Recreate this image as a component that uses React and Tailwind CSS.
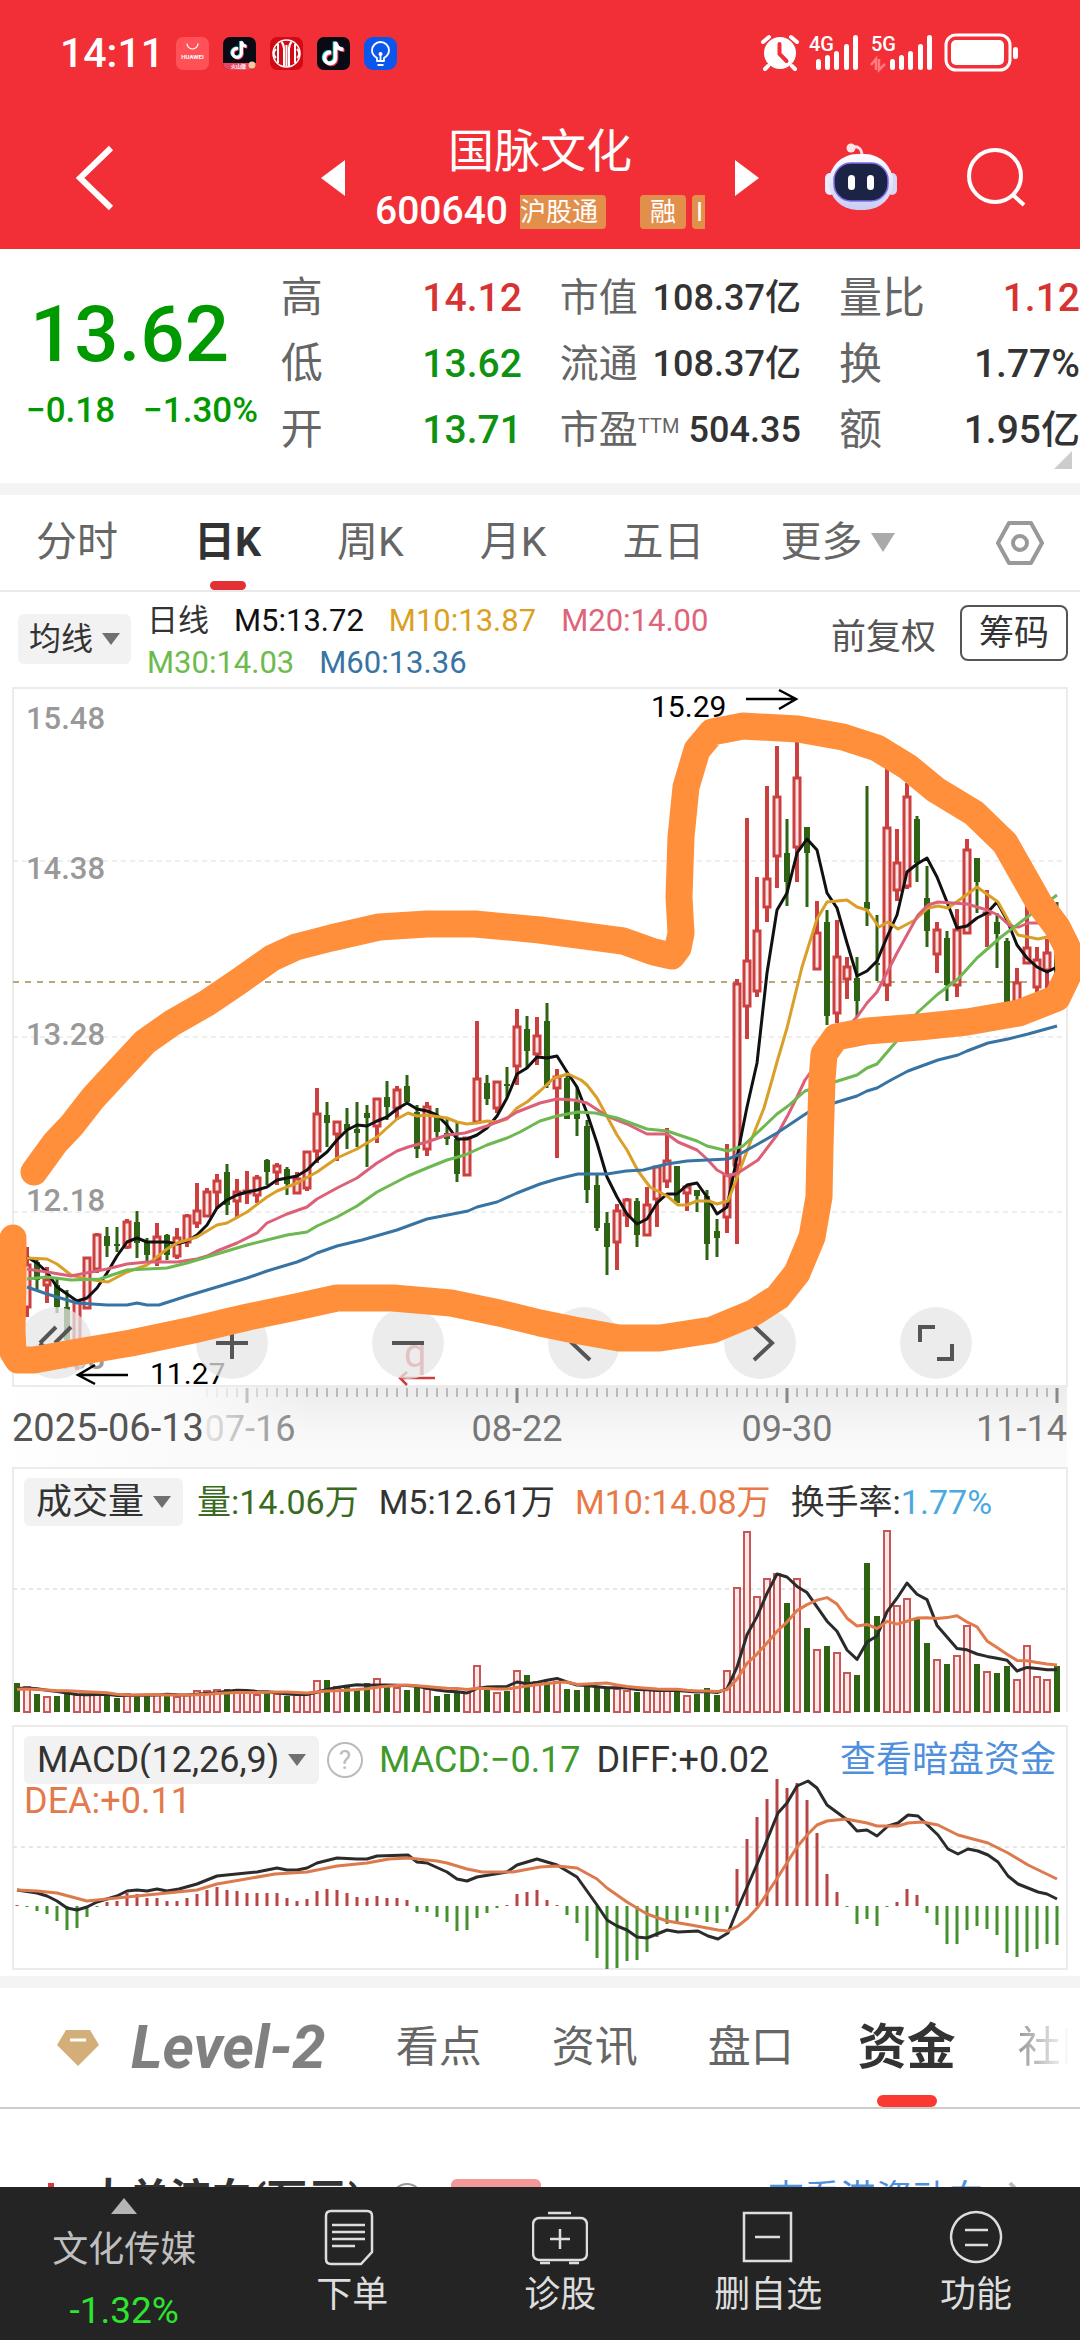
import React from 'react';

const RED = '#cc3f3f';
const GREEN = '#2f6314';

// [direction, high, body top, body bottom, low, volume, macd]
const CANDLES = [
  [0, 1255, 1262, 1290, 1295, 29, 1], [1, 1247, 1265, 1307, 1317, 25, -1], [0, 1260, 1262, 1280, 1290, 18, -5],
  [1, 1267, 1280, 1285, 1303, 15, -8], [0, 1279, 1285, 1307, 1313, 16, -15], [0, 1290, 1307, 1340, 1350, 21, -24],
  [1, 1300, 1302, 1345, 1370, 17, -22], [1, 1257, 1258, 1308, 1308, 17, -11], [1, 1233, 1235, 1269, 1273, 17, -1],
  [0, 1227, 1236, 1246, 1257, 17, 4], [0, 1227, 1244, 1245, 1252, 14, 5], [1, 1219, 1222, 1247, 1249, 18, 13],
  [0, 1211, 1222, 1243, 1258, 18, 12], [0, 1238, 1242, 1255, 1261, 17, 8], [1, 1223, 1237, 1259, 1266, 18, 8],
  [0, 1234, 1235, 1255, 1260, 18, 5], [1, 1228, 1238, 1256, 1259, 15, 5], [1, 1214, 1216, 1242, 1247, 17, 8],
  [1, 1183, 1211, 1223, 1228, 21, 12], [1, 1188, 1192, 1216, 1216, 21, 16], [1, 1174, 1181, 1192, 1209, 22, 19],
  [0, 1164, 1172, 1205, 1215, 23, 16], [1, 1179, 1192, 1201, 1217, 22, 15], [1, 1171, 1191, 1193, 1204, 19, 13],
  [1, 1175, 1178, 1195, 1203, 17, 13], [0, 1159, 1160, 1172, 1185, 20, 13], [1, 1163, 1166, 1172, 1185, 18, 13],
  [0, 1167, 1169, 1184, 1195, 16, 8], [1, 1172, 1179, 1193, 1194, 17, 5], [1, 1151, 1152, 1188, 1191, 17, 7],
  [1, 1088, 1114, 1151, 1163, 31, 15], [0, 1102, 1115, 1123, 1147, 32, 17], [1, 1121, 1122, 1134, 1161, 25, 16],
  [0, 1108, 1124, 1130, 1149, 25, 13], [0, 1102, 1129, 1133, 1147, 23, 9], [0, 1105, 1113, 1118, 1167, 29, 8],
  [1, 1098, 1099, 1126, 1143, 33, 10], [0, 1081, 1097, 1107, 1120, 25, 8], [1, 1086, 1090, 1108, 1120, 24, 8],
  [0, 1075, 1086, 1102, 1102, 22, 6], [0, 1105, 1112, 1149, 1158, 25, -6], [1, 1102, 1107, 1149, 1156, 23, -6],
  [0, 1108, 1116, 1132, 1137, 16, -11], [0, 1119, 1133, 1139, 1145, 18, -16], [0, 1122, 1139, 1174, 1182, 19, -25],
  [1, 1138, 1138, 1175, 1175, 19, -24], [1, 1021, 1079, 1122, 1123, 46, -12], [0, 1075, 1083, 1099, 1105, 23, -7],
  [1, 1082, 1082, 1108, 1113, 19, -2], [0, 1067, 1084, 1086, 1097, 21, 1], [1, 1009, 1027, 1066, 1085, 41, 12],
  [0, 1016, 1029, 1051, 1068, 37, 14], [1, 1017, 1036, 1054, 1065, 30, 16], [0, 1003, 1021, 1085, 1088, 30, 6],
  [1, 1069, 1077, 1088, 1158, 30, 1], [0, 1073, 1078, 1119, 1119, 23, -9], [0, 1087, 1102, 1119, 1136, 22, -17],
  [0, 1120, 1126, 1190, 1203, 27, -35], [0, 1175, 1185, 1228, 1231, 24, -52], [0, 1212, 1223, 1247, 1275, 25, -63],
  [1, 1204, 1211, 1242, 1270, 23, -62], [1, 1198, 1200, 1215, 1227, 21, -55], [0, 1198, 1201, 1235, 1247, 20, -54],
  [1, 1187, 1205, 1235, 1235, 22, -46], [1, 1166, 1167, 1199, 1227, 22, -31], [1, 1128, 1161, 1181, 1188, 22, -18],
  [0, 1166, 1166, 1203, 1203, 22, -16], [1, 1185, 1187, 1193, 1211, 16, -12], [0, 1190, 1190, 1196, 1212, 18, -9],
  [0, 1190, 1196, 1244, 1260, 24, -16], [0, 1219, 1231, 1238, 1257, 17, -17], [1, 1144, 1175, 1217, 1233, 41, -6],
  [1, 979, 984, 1165, 1244, 124, 37], [1, 818, 961, 1006, 1039, 180, 67], [1, 877, 931, 991, 997, 115, 89],
  [1, 786, 879, 907, 922, 133, 107], [1, 746, 797, 856, 888, 138, 127], [0, 819, 853, 882, 906, 109, 118],
  [1, 735, 778, 847, 882, 133, 123], [0, 827, 827, 853, 907, 84, 106], [1, 901, 933, 969, 969, 62, 73],
  [0, 910, 922, 1016, 1025, 66, 32], [1, 920, 957, 1013, 1023, 59, 14], [1, 957, 967, 979, 999, 39, -1],
  [0, 957, 978, 1001, 1017, 37, -18], [0, 786, 902, 909, 926, 149, -13], [0, 915, 963, 964, 981, 96, -20],
  [1, 768, 828, 985, 1001, 181, -1], [1, 829, 863, 890, 901, 106, 4], [1, 783, 797, 886, 889, 113, 17],
  [0, 816, 819, 863, 882, 93, 11], [0, 866, 898, 931, 947, 69, -7], [1, 922, 930, 954, 973, 52, -19],
  [0, 931, 938, 985, 1001, 48, -38], [1, 909, 930, 985, 997, 56, -38], [1, 839, 850, 933, 933, 86, -24],
  [0, 858, 858, 882, 913, 48, -20], [1, 890, 913, 914, 947, 40, -23], [0, 913, 922, 934, 968, 39, -29],
  [0, 938, 941, 1007, 1007, 46, -47], [1, 968, 983, 1002, 1004, 32, -51], [1, 860, 948, 963, 963, 66, -46],
  [1, 947, 960, 987, 992, 35, -43], [1, 939, 953, 970, 992, 32, -38], [0, 902, 940, 975, 975, 46, -39],
];

const barX = (i) => 17 + i * 10;

const M5 = [
  1257, 1263, 1272, 1287, 1294, 1301, 1298, 1288, 1273, 1256, 1242, 1238, 1242, 1242, 1242, 1244, 1241, 1235, 1225, 1208,
  1200, 1195, 1192, 1190, 1187, 1180, 1178, 1176, 1170, 1160, 1152, 1140, 1130, 1125, 1126, 1121, 1117, 1109, 1103, 1109,
  1111, 1115, 1125, 1139, 1139, 1135, 1128, 1116, 1098, 1074, 1068, 1057, 1058, 1056, 1072, 1087, 1113, 1143, 1177, 1197,
  1214, 1224, 1219, 1203, 1194, 1194, 1185, 1183, 1197, 1214, 1207, 1157, 1107, 1063, 973, 910, 893, 853, 839, 850,
  893, 908, 943, 976, 971, 961, 937, 915, 872, 864, 858, 877, 902, 928, 926, 918, 913, 902, 920, 945,
  958, 967, 972, 967,
].map((y, i) => `${barX(i + 1)},${y}`).join(' ');

const M10 = '27,1258 47,1259 57,1264 71,1275 86,1279 108,1282 127,1272 147,1265 167,1249 177,1243 197,1237 217,1225 227,1223 247,1212 267,1197 277,1191 297,1183 317,1172 337,1158 357,1149 377,1137 397,1119 408,1113 417,1116 427,1115 447,1118 457,1122 467,1124 477,1123 487,1121 497,1122 507,1119 517,1108 527,1102 540,1091 554,1078 568,1074 581,1080 587,1085 597,1098 617,1135 627,1150 638,1171 650,1187 667,1196 678,1205 687,1205 697,1201 709,1201 717,1204 728,1201 738,1175 750,1143 764,1108 772,1080 777,1062 787,1028 802,967 817,919 827,902 847,900 857,907 867,910 879,927 888,922 898,929 915,920 928,908 938,906 948,908 958,901 977,887 998,902 1008,920 1018,935 1028,937 1038,939 1047,937 1057,940';
const M20 = '27,1269 47,1272 71,1276 86,1273 107,1269 127,1264 147,1262 177,1262 197,1259 207,1256 217,1251 237,1243 257,1233 267,1223 287,1214 307,1207 317,1199 337,1188 357,1178 377,1163 397,1151 408,1147 427,1142 447,1135 465,1133 487,1126 507,1118 517,1112 540,1103 557,1099 574,1100 587,1103 607,1116 627,1124 647,1134 667,1134 678,1142 697,1150 707,1159 717,1170 728,1176 738,1173 758,1160 777,1135 788,1115 797,1097 805,1080 830,1045 857,1017 867,1003 877,992 897,953 918,915 928,905 938,902 967,904 987,910 998,915 1010,926 1019,927 1028,923 1040,923 1057,915';
const M30 = '27,1279 47,1277 71,1280 100,1279 127,1270 167,1268 187,1263 217,1254 247,1245 287,1235 307,1232 317,1226 337,1217 357,1206 377,1192 408,1176 427,1168 447,1160 465,1155 487,1145 507,1138 520,1132 540,1121 557,1116 578,1112 595,1113 617,1118 647,1129 667,1131 697,1141 707,1146 728,1151 743,1146 758,1132 777,1114 788,1106 805,1091 841,1080 857,1075 867,1068 877,1064 895,1043 918,1012 938,994 958,979 977,958 1001,937 1026,918 1057,895';
const M60 = '27,1287 47,1294 77,1303 107,1305 127,1305 137,1303 147,1305 159,1305 187,1296 217,1287 247,1278 267,1271 297,1262 307,1258 317,1253 337,1246 362,1240 397,1230 427,1219 468,1211 477,1207 497,1202 517,1193 540,1184 557,1179 578,1174 607,1174 626,1171 643,1170 667,1164 687,1161 707,1160 728,1159 738,1155 758,1144 777,1133 807,1113 834,1103 857,1096 867,1091 877,1088 891,1080 908,1071 938,1060 958,1055 967,1051 988,1043 1008,1039 1028,1034 1057,1026';
const DIFF = '17,1890 37,1893 47,1896 57,1901 67,1908 77,1910 87,1907 97,1902 117,1896 127,1891 137,1890 147,1891 157,1889 167,1891 179,1889 197,1884 217,1876 257,1872 277,1868 287,1870 297,1870 307,1868 317,1863 337,1858 357,1859 367,1859 377,1856 408,1855 417,1862 427,1863 447,1872 457,1879 467,1881 477,1877 507,1872 517,1865 537,1859 557,1865 577,1877 597,1905 607,1920 617,1926 627,1930 637,1937 647,1938 667,1930 678,1932 698,1931 708,1936 718,1939 728,1933 738,1908 758,1862 778,1813 787,1803 797,1786 808,1781 817,1788 827,1805 846,1819 857,1831 867,1830 877,1836 888,1826 898,1823 908,1815 918,1816 938,1835 948,1849 958,1854 968,1849 978,1851 988,1855 998,1862 1008,1876 1018,1884 1038,1892 1047,1894 1057,1899';
const DEA = '17,1890 37,1891 57,1893 87,1901 107,1899 137,1896 197,1890 217,1884 275,1874 307,1872 337,1866 367,1863 389,1859 408,1858 437,1861 447,1863 467,1869 482,1872 513,1872 540,1867 557,1866 577,1868 597,1879 607,1888 627,1902 647,1914 667,1921 691,1925 718,1930 728,1931 738,1926 748,1918 758,1907 778,1877 797,1847 808,1834 817,1825 827,1821 846,1819 867,1823 877,1826 898,1826 908,1823 922,1822 938,1825 958,1835 988,1843 1008,1853 1028,1865 1057,1879';

const DOODLE = '34,1172 55,1143 72,1125 93,1098 117,1072 145,1042 172,1023 207,1003 238,982 272,958 296,947 331,938 379,927 427,924 475,924 540,930 623,941 654,952 672,956 678,948 681,933 679,897 681,837 686,787 697,750 712,732 743,726 798,729 843,737 877,748 908,767 936,790 974,813 1005,843 1022,873 1039,903 1057,927 1067,947 1069,973 1057,998 1019,1013 967,1022 919,1027 867,1031 836,1037 824,1054 822,1080 821,1113 820,1147 819,1197 812,1237 797,1273 778,1297 753,1313 712,1330 660,1338 619,1338 574,1330 540,1323 499,1313 451,1303 393,1298 337,1298 296,1307 248,1317 193,1330 131,1343 72,1353 34,1360 18,1360 13,1352 12,1330 13,1280 13,1238';

const average = (n) =>
  CANDLES.map((_, i) => {
    let sum = 0;
    for (let k = i - n + 1; k <= i; k++) sum += k < 0 ? 22 : CANDLES[k][5];
    return `${barX(i)},${1712 - sum / n}`;
  }).join(' ');

const numFont = "font-['Roboto','Noto_Sans_CJK_SC',sans-serif]";

const Line = ({ points, color }) => (
  <polyline points={points} fill="none" stroke={color} strokeWidth="3" strokeLinejoin="round" />
);

const Dropdown = ({ label, text, className }) => (
  <label className={`flex items-center rounded-md bg-[#f2f2f2] text-[#333] ${className}`}>
    <select aria-label={label} className="appearance-none bg-transparent leading-none outline-none">
      <option>{text}</option>
    </select>
    <svg viewBox="0 0 18 12" className="ml-2 h-3 w-[18px]"><path d="M0 0h18L9 12z" fill="#707070" /></svg>
  </label>
);

const StatusBar = () => (
  <div className="flex h-[106px] items-center px-[60px] text-white">
    <span className="text-[41px] leading-none font-medium">14:11</span>
    <div className="ml-3 flex gap-[14px]">
      <svg viewBox="0 0 33 33" className="size-[33px]">
        <rect width="33" height="33" rx="7" fill="#ff5157" />
        <path d="M11 6.500a5.500 5.500 0 0 0 11 0" fill="none" stroke="#fff" strokeWidth="1.200" />
        <text x="16.500" y="21.500" textAnchor="middle" fontSize="6" fontWeight="700" fill="#fff">HUAWEI</text>
      </svg>
      <svg viewBox="0 0 33 33" className="size-[33px]">
        <rect width="33" height="33" rx="7" fill="#0a0a14" />
        <g fill="none" strokeWidth="3">
          <path d="M15 11.500a4.500 4.500 0 1 0 3.500 5V4.500c.5 3 2.500 4.500 5 4.700" stroke="#f3395a" transform="translate(.8 .8)" />
          <path d="M15 11.500a4.500 4.500 0 1 0 3.500 5V4.500c.5 3 2.500 4.500 5 4.700" stroke="#35e6e0" transform="translate(-.8 -.5)" />
          <path d="M15 11.500a4.500 4.500 0 1 0 3.500 5V4.500c.5 3 2.500 4.500 5 4.700" stroke="#fff" />
        </g>
        <path d="M0 26h33c0 4-3 7-7 7H7c-4 0-7-3-7-7z" fill="#e8445e" />
        <text x="8" y="31" fontSize="5" fontWeight="700" fill="#fff">火山版</text>
        <circle cx="29" cy="28" r="3.500" fill="#f6c79a" />
      </svg>
      <svg viewBox="0 0 33 33" className="size-[33px]">
        <rect width="33" height="33" rx="7" fill="#d20a14" />
        <circle cx="16.500" cy="16.500" r="13.500" fill="none" stroke="#fff" strokeWidth="1.500" />
        <path d="M8 7v19M11.500 5c2 2 2.500 4 2.500 7v17M16.500 8v21M21.500 5c-2 2-2.500 4-2.500 7v17M25 7v19M6 12c-3 3-3 6 0 9M27 12c3 3 3 6 0 9" fill="none" stroke="#fff" strokeWidth="2" />
      </svg>
      <svg viewBox="0 0 33 33" className="size-[33px]">
        <rect width="33" height="33" rx="7" fill="#0a0a14" />
        <g fill="none" strokeWidth="3.600">
          <path d="M14 15.500a5.500 5.500 0 1 0 4.500 6V5c.5 4.500 3.500 7.200 8 7.500" stroke="#f3395a" transform="translate(1 1)" />
          <path d="M14 15.500a5.500 5.500 0 1 0 4.500 6V5c.5 4.500 3.500 7.200 8 7.500" stroke="#35e6e0" transform="translate(-1 -.6)" />
          <path d="M14 15.500a5.500 5.500 0 1 0 4.500 6V5c.5 4.500 3.500 7.200 8 7.500" stroke="#fff" />
        </g>
      </svg>
      <svg viewBox="0 0 33 33" className="size-[33px]">
        <rect width="33" height="33" rx="9" fill="#0b57ee" />
        <path d="M13 24v-3c-3-2-5-4-5-7.500a8.500 8.500 0 0 1 17 0c0 3.500-2 5.500-5 7.500v3zM13.500 28h6M16.500 24v-6" fill="none" stroke="#fff" strokeWidth="1.800" strokeLinejoin="round" />
        <circle cx="16.500" cy="17" r="2" fill="#fff" />
      </svg>
    </div>
    <svg viewBox="0 -6 260 52" className="ml-auto h-[52px] w-[260px]" fill="#fff">
      {/* alarm */}
      <circle cx="20" cy="20" r="16" />
      <path d="M3 9l6-5M37 9l-6-5M8 33l-3 3M32 33l3 3" stroke="#fff" strokeWidth="4" strokeLinecap="round" />
      <path d="M19.500 11v10l7 7" fill="none" stroke="#f22f37" strokeWidth="4" strokeLinecap="round" />
      {/* signal */}
      <text x="49" y="18" fontSize="20" fontWeight="500">4G</text>
      {[[59, 26], [68, 22], [77, 18], [87, 11], [96, 2]].map(([x, y]) => (
        <rect key={x} x={x - 3} y={y} width="5" height={37 - y} rx="2.500" />
      ))}
      <text x="111" y="18" fontSize="20" fontWeight="500">5G</text>
      <path d="M111 32l5-6v11M119 26v11l6-6" fill="none" stroke="#ff7b7f" strokeWidth="2.500" />
      {[[133, 26], [142, 22], [151, 18], [161, 11], [170, 2]].map(([x, y]) => (
        <rect key={x} x={x - 3} y={y} width="5" height={37 - y} rx="2.500" />
      ))}
      <rect x="186" y="2" width="64" height="35" rx="10" fill="none" stroke="#fff" strokeWidth="3" />
      <rect x="191" y="7" width="53" height="25" rx="5" />
      <rect x="253" y="14" width="5" height="12" rx="2.500" />
    </svg>
  </div>
);

const Header = () => (
  <header className="bg-[#f22f37] text-white">
    <StatusBar />
    <div className="flex h-[143px] items-center pr-[54px] pl-[76px]">
      <button aria-label="返回">
        <svg viewBox="0 0 38 66" className="h-[66px] w-[38px]"><path d="M35 3L4 33l31 30" fill="none" stroke="#fff" strokeWidth="6" /></svg>
      </button>
      <button aria-label="上一只" className="ml-auto">
        <svg viewBox="0 0 24 36" className="h-9 w-6"><path d="M24 0v36L0 18z" fill="#fff" /></svg>
      </button>
      <div className="mx-[30px] w-[330px] pt-2">
        <h1 className="text-center text-[46px] leading-[60px]">国脉文化</h1>
        <div className="flex h-[62px] items-center">
          <span className="text-[39px] leading-none font-medium">600640</span>
          <div className="ml-3 flex flex-1 overflow-hidden text-[26px] leading-[34px]">
            <span className="rounded-r-sm bg-[#e38f4c] pr-2 whitespace-nowrap">沪股通</span>
            <span className="ml-[34px] rounded-sm bg-[#e38f4c] px-[10px]">融</span>
            <span className="ml-[6px] rounded-l-sm bg-[#e38f4c] px-1">I</span>
          </div>
        </div>
      </div>
      <button aria-label="下一只">
        <svg viewBox="0 0 24 36" className="h-9 w-6"><path d="M0 0v36l24-18z" fill="#fff" /></svg>
      </button>
      <button aria-label="智能助手" className="ml-[66px]">
        <svg viewBox="0 0 72 70" className="h-[70px] w-[72px]">
          <defs>
            <linearGradient id="shell" x1="0" y1="0" x2="0" y2="1">
              <stop offset="0" stopColor="#fff" />
              <stop offset="1" stopColor="#c9cdf5" />
            </linearGradient>
          </defs>
          <path d="M26 5c6-3 11 0 11 8" fill="none" stroke="#fbdfe6" strokeWidth="3" />
          <circle cx="26" cy="5" r="4.500" fill="#fbe6ec" />
          <rect x="0" y="30" width="10" height="22" rx="5" fill="#eceafd" />
          <rect x="62" y="30" width="10" height="22" rx="5" fill="#d6d6f8" />
          <rect x="4" y="11" width="64" height="56" rx="28" fill="url(#shell)" />
          <rect x="9" y="20" width="54" height="38" rx="17" fill="#1b2444" stroke="#7f6be8" strokeWidth="1.500" />
          <rect x="23" y="32" width="7" height="15" rx="3.500" fill="#fff" />
          <rect x="42" y="32" width="7" height="15" rx="3.500" fill="#fff" />
        </svg>
      </button>
      <button aria-label="搜索" className="ml-[69px]">
        <svg viewBox="0 0 60 60" className="size-[60px]" fill="none" stroke="#fff" strokeWidth="4">
          <circle cx="29" cy="28" r="26" />
          <path d="M47 47l11 10" />
        </svg>
      </button>
    </div>
  </header>
);

const QUOTES = [
  {
    size: 'text-[42px]',
    value: 'text-[39px] font-medium',
    rows: [['高', '14.12', 'text-[#d63333]'], ['低', '13.62', 'text-[#0f9212]'], ['开', '13.71', 'text-[#0f9212]']],
  },
  {
    size: 'text-[39px]',
    value: 'text-[36px] font-medium',
    rows: [['市值', '108.37亿', 'text-[#333]'], ['流通', '108.37亿', 'text-[#333]'], ['市盈', '504.35', 'text-[#333]']],
  },
  {
    size: 'text-[43px]',
    value: 'text-[39px] font-medium',
    rows: [['量比', '1.12', 'text-[#d63333]'], ['换', '1.77%', 'text-[#333]'], ['额', '1.95亿', 'text-[#333]']],
  },
];

const QuotePanel = () => (
  <section className="relative flex h-[234px] bg-white">
    <div className="w-[26%] pt-[46px] pl-[26px] text-[#009900]">
      <div className="pl-1 text-[78px] leading-[80px] font-medium">13.62</div>
      <div className="mt-4 flex gap-7 text-[35px] leading-[40px] font-medium">
        <span>−0.18</span>
        <span>−1.30%</span>
      </div>
    </div>
    <div className="flex flex-1 gap-[38px] pt-4">
      {QUOTES.map((col) => (
        <dl key={col.size} className="flex-1">
          {col.rows.map(([name, value, color]) => (
            <div key={name} className="flex h-[66px] items-center justify-between whitespace-nowrap">
              <dt className={`leading-none text-[#666] ${col.size}`}>
                {name}
                {name === '市盈' && <sup className="text-[20px]">TTM</sup>}
              </dt>
              <dd className={`leading-none ${col.value} ${color}`}>{value}</dd>
            </div>
          ))}
        </dl>
      ))}
    </div>
    <svg viewBox="0 0 18 18" className="absolute right-2 bottom-[14px] size-[18px]"><path d="M18 0v18H0z" fill="#ccc" /></svg>
  </section>
);

const PeriodTabs = () => (
  <nav className="flex h-[97px] items-center border-b-2 border-[#e9e9e9] pr-9 pl-9 text-[41px] leading-none text-[#666]">
    <div className="flex h-full items-center gap-[76px]">
      <button>分时</button>
      <button className="relative h-full font-bold text-[#333]">
        日K
        <span className="absolute bottom-0 left-1/2 h-[9px] w-9 -translate-x-1/2 rounded-full bg-[#e23035]" />
      </button>
      <button>周K</button>
      <button>月K</button>
      <button>五日</button>
      <button className="flex items-center gap-2">
        更多
        <svg viewBox="0 0 24 19" className="h-[19px] w-6"><path d="M0 0h24L12 19z" fill="#aaa" /></svg>
      </button>
    </div>
    <button aria-label="设置" className="ml-auto">
      <svg viewBox="0 0 48 46" className="h-[46px] w-12" fill="none" stroke="#999" strokeWidth="4" strokeLinejoin="round">
        <path d="M13 3h22l11 20-11 20H13L2 23z" />
        <circle cx="24" cy="23" r="7" />
      </svg>
    </button>
  </nav>
);

const Legend = () => (
  <div className="flex h-[95px] items-start px-3 pt-2">
    <Dropdown label="主图指标" text="均线" className="mt-[14px] ml-[6px] h-[50px] px-[11px] text-[32px]" />
    <div className="ml-4 flex w-[620px] flex-wrap gap-x-[25px] text-[31px] leading-[42px]">
      <span className="text-[#333]">日线</span>
      <span className="text-[#111]">M5:13.72</span>
      <span className="text-[#dba022]">M10:13.87</span>
      <span className="mr-12 text-[#df6479]">M20:14.00</span>
      <span className="text-[#6dbb4c]">M30:14.03</span>
      <span className="text-[#3874a3]">M60:13.36</span>
    </div>
    <button className="mt-[18px] ml-auto text-[35px] leading-[40px] text-[#555]">前复权</button>
    <button className="mt-[5px] ml-6 h-[56px] w-[108px] rounded-lg border-2 border-[#555] text-[35px] leading-none text-[#333]">筹码</button>
  </div>
);

const CHART_BUTTONS = [
  ['最早', 'M36 20L20 36M51 20L35 36M20 36L36 52M35 36L51 52'],
  ['放大', 'M20 36h32M36 20v32'],
  ['缩小', 'M20 36h32'],
  ['左移', 'M42 19L24 36l18 17'],
  ['右移', 'M30 19l18 17-18 17'],
  ['全屏', 'M20 35V20h15M52 37v15H37'],
];

const PriceChart = () => (
  <div className="relative">
    <svg viewBox="0 687 1080 700" className="block w-full">
      <rect x="13" y="688" width="1054" height="698" fill="none" stroke="#ebebeb" strokeWidth="2" />
      {[861, 1037, 1212].map((y) => (
        <path key={y} d={`M13 ${y}h1054`} stroke="#dedede" strokeDasharray="5 4" />
      ))}
      <path d="M13 982h1054" stroke="#b9a878" strokeWidth="2" strokeDasharray="6 6" />
      <g fontSize="31" fontWeight="500" fill="#999">
        <text x="26" y="729">15.48</text>
        <text x="26" y="879">14.38</text>
        <text x="26" y="1045">13.28</text>
        <text x="26" y="1211">12.18</text>
        <text x="26" y="1369">11.08</text>
      </g>
      {CANDLES.map(([up, high, top, bottom, low], i) => (
        <g key={i} stroke={up ? RED : GREEN}>
          <path d={`M${barX(i)} ${high}V${top}M${barX(i)} ${bottom}V${low}`} strokeWidth={up ? 4 : 3} />
          {up ? (
            <rect x={barX(i) - 3} y={top} width="6" height={Math.max(bottom - top, 1)} strokeWidth="3" fill="#fbe3e3" />
          ) : (
            <rect x={barX(i) - 3} y={top} width="6" height={Math.max(bottom - top, 2)} stroke="none" fill={GREEN} />
          )}
        </g>
      ))}
      <Line points={M5} color="#111" />
      <Line points={M10} color="#d99f27" />
      <Line points={M20} color="#dc6078" />
      <Line points={M30} color="#6db851" />
      <Line points={M60} color="#3874a3" />
      <text x="651" y="717" fontSize="30" fill="#000">15.29</text>
      <path d="M746 699h50M779 690l17 9-17 10" fill="none" stroke="#000" strokeWidth="2.500" />
      <text x="150" y="1384" fontSize="30" fill="#000">11.27</text>
      <path d="M128 1375H78M95 1365l-17 10 17 9" fill="none" stroke="#000" strokeWidth="2.500" />
      <text x="404" y="1367" fontSize="40" fill="#dd5a5a">q</text>
      <path d="M435 1378h-35M407 1372l-7 6 7 7" fill="none" stroke="#cc3f3f" strokeWidth="2.500" />
    </svg>
    <div className="absolute bottom-2 left-5 flex gap-[104px]">
      {CHART_BUTTONS.map(([name, d]) => (
        <button key={name} aria-label={name} className="size-[72px] rounded-full bg-[#e6e6e6]/75">
          <svg viewBox="0 0 72 72" fill="none" stroke="#555" strokeWidth="4"><path d={d} /></svg>
        </button>
      ))}
    </div>
    <svg viewBox="0 687 1080 700" className="pointer-events-none absolute inset-0 w-full">
      <polyline points={DOODLE} fill="none" stroke="#ff8f3a" strokeWidth="27" strokeLinecap="round" strokeLinejoin="round" />
    </svg>
  </div>
);

const DateAxis = () => (
  <svg viewBox="0 0 1080 80" className="block w-full">
    <defs>
      <linearGradient id="axis" x1="0" y1="0" x2="0" y2="1">
        <stop offset="0" stopColor="#ececec" />
        <stop offset="0.6" stopColor="#f8f8f8" />
        <stop offset="1" stopColor="#fbfbfb" />
      </linearGradient>
      <linearGradient id="fade" x1="0" y1="0" x2="1" y2="0">
        <stop offset="0" stopColor="#fff" />
        <stop offset="0.6" stopColor="#fafafa" />
        <stop offset="1" stopColor="#fafafa" stopOpacity="0" />
      </linearGradient>
    </defs>
    <rect x="13" width="1054" height="80" fill="url(#axis)" />
    {Array.from({ length: 86 }, (_, k) => 207 + k * 10).map((x) => (
      <path key={x} d={(x - 247) % 270 === 0 ? `M${x} 1v15` : `M${x} 1v9`} stroke="#888" strokeWidth={(x - 247) % 270 === 0 ? 3 : 1} />
    ))}
    <g fontSize="36" fill="#777" textAnchor="middle">
      <text x="250" y="54">07-16</text>
      <text x="517" y="54">08-22</text>
      <text x="787" y="54">09-30</text>
      <text x="1067" y="54" textAnchor="end">11-14</text>
    </g>
    <rect x="0" width="310" height="80" fill="url(#fade)" />
    <text x="12" y="54" fontSize="38" fill="#555">2025-06-13</text>
  </svg>
);

const VolumeChart = () => (
  <section className="relative">
    <svg viewBox="0 1467 1080 258" className="block w-full">
      <path d="M13 1712V1468h1054v244" fill="none" stroke="#ebebeb" strokeWidth="2" />
      <path d="M13 1589h1054" stroke="#e6e6e6" strokeWidth="2" strokeDasharray="4 4" />
      {CANDLES.map(([up, , , , , vol], i) =>
        up ? (
          <rect key={i} x={barX(i) - 3} y={1712 - vol} width="6" height={vol} fill="#fbe9e9" stroke="#c95555" strokeWidth="2" />
        ) : (
          <rect key={i} x={barX(i) - 3} y={1712 - vol} width="6" height={vol} fill={GREEN} />
        )
      )}
      <Line points={average(5)} color="#2b2b2b" />
      <Line points={average(10)} color="#e27a4b" />
    </svg>
    <div className="absolute top-[11px] left-6 flex items-center text-[34px] leading-[48px] whitespace-nowrap">
      <Dropdown label="副图指标" text="成交量" className="mr-[14px] h-12 px-3 text-[36px]" />
      <span className="mr-5 text-[#396b1f]">量:14.06万</span>
      <span className="mr-5 text-[#333]">M5:12.61万</span>
      <span className="mr-5 text-[#e77a48]">M10:14.08万</span>
      <span className="text-[#333]">换手率:</span>
      <span className="text-[#4ba9e0]">1.77%</span>
    </div>
  </section>
);

const MacdChart = () => (
  <section className="relative">
    <svg viewBox="0 1725 1080 245" className="block w-full">
      <rect x="13" y="1726" width="1054" height="243" fill="none" stroke="#ebebeb" strokeWidth="2" />
      <path d="M13 1847h1054" stroke="#e6e6e6" strokeWidth="2" strokeDasharray="4 4" />
      {CANDLES.map((c, i) => (
        <path key={i} d={`M${barX(i)} 1906v${-c[6]}`} stroke={c[6] > 0 ? '#b84545' : '#44902f'} strokeWidth="3" />
      ))}
      <Line points={DIFF} color="#2b2b2b" />
      <Line points={DEA} color="#dc7a4e" />
    </svg>
    <div className="absolute top-[11px] right-6 left-6 text-[36px] whitespace-nowrap">
      <div className="flex h-12 items-center">
        <Dropdown label="副图指标二" text="MACD(12,26,9)" className="h-12 px-[13px]" />
        <button aria-label="帮助" className="mx-2 flex size-9 items-center justify-center rounded-full border-2 border-[#bbb] text-[26px] leading-none text-[#bbb]">?</button>
        <span className="ml-2 text-[#3f9a2b]">MACD:−0.17</span>
        <span className="ml-4 text-[#333]">DIFF:+0.02</span>
        <a href="#dark" className="ml-auto text-[36px] text-[#4f8fdc]">查看暗盘资金</a>
      </div>
      <div className="leading-[34px] text-[#e27a4b]">DEA:+0.11</div>
    </div>
  </section>
);

const InfoTabs = () => (
  <nav className="flex h-[121px] items-center overflow-hidden border-b-2 border-[#ccc] pl-[57px] text-[43px] leading-none whitespace-nowrap text-[#666]">
    <svg viewBox="0 0 42 36" className="h-9 w-[42px] shrink-0">
      <path d="M9 0h24l9 15-21 21L0 15z" fill="#d3ae79" />
      <path d="M13 10h16" stroke="#fff" strokeWidth="3" />
    </svg>
    <button className="ml-8 text-[60px] font-bold text-[#808080] italic">Level-2</button>
    <div className="ml-[70px] flex h-full items-center gap-[70px]">
      <button>看点</button>
      <button>资讯</button>
      <button>盘口</button>
      <button className="relative -ml-[6px] h-full text-[49px] font-bold text-[#333]">
        资金
        <span className="absolute bottom-0 left-1/2 h-3 w-[60px] -translate-x-1/2 rounded-full bg-[#fa3a32]" />
      </button>
      <button className="-ml-2 bg-gradient-to-r from-[#999] to-white to-60% bg-clip-text text-transparent">社区</button>
    </div>
  </nav>
);

const FlowPreview = () => (
  <section className="flex items-center px-12 pt-[66px] text-[40px] leading-[48px] whitespace-nowrap">
    <span className="mt-1 h-9 w-[6px] bg-[#d5393b]" />
    <h2 className="ml-[34px] text-[41px] font-bold text-[#333]">大单流向(万元)</h2>
    <span className="ml-7 size-8 rounded-full border-2 border-[#999]" />
    <span className="ml-7 h-10 w-[90px] rounded-md bg-[#f19a97]" />
    <a href="#flow" className="ml-auto text-[36px] text-[#4f8fdc]">查看港资动向</a>
    <svg viewBox="0 0 20 36" className="mr-1 ml-6 h-9 w-5" fill="none" stroke="#bbb" strokeWidth="4"><path d="M2 2l15 16L2 34" /></svg>
  </section>
);

const NAV_ITEMS = [
  ['下单', <path d="M7 2h36q5 0 5 5v36L37 55H7q-5 0-5-5V7q0-5 5-5zM8 16h33M8 23h33M8 30h33M8 37h23" />],
  ['诊股', <path d="M16 4h23M8 9h40q7 0 7 7v28q0 7-7 7H8q-7 0-7-7V16q0-7 7-7zM8 54h10M37 54h10M18 30h20M28 20v20" />],
  ['删自选', <path d="M4 4h47v48H4zM15 28h25" />],
  ['功能', <path d="M28 3a25 25 0 1 0 .1 0zM17 21h23M17 36h23" />],
];

const BottomNav = () => (
  <footer className="flex h-[153px] shrink-0 bg-[#242424] text-[36px] leading-none text-[#ddd]">
    <button className="flex w-[23%] flex-col items-center pt-[11px]">
      <svg viewBox="0 0 26 16" className="h-4 w-[26px]"><path d="M13 0l13 16H0z" fill="#b5b5b5" /></svg>
      <span className="mt-[18px] text-[#bfbfbf]">文化传媒</span>
      <span className="mt-6 text-[37px] text-[#2ee52e]">-1.32%</span>
    </button>
    {NAV_ITEMS.map(([name, icon]) => (
      <button key={name} className="flex flex-1 flex-col items-center pt-[22px]">
        <svg viewBox="0 0 56 58" className="h-[58px] w-14" fill="none" stroke="#ddd" strokeWidth="2.500">{icon}</svg>
        <span className="mt-[10px]">{name}</span>
      </button>
    ))}
  </footer>
);

export default function App() {
  return (
    <div className={`flex h-screen flex-col overflow-hidden bg-white ${numFont}`}>
      <main className="min-h-0 flex-1 overflow-hidden">
        <Header />
        <QuotePanel />
        <div className="h-3 bg-[#f4f4f4]" />
        <PeriodTabs />
        <Legend />
        <PriceChart />
        <DateAxis />
        <VolumeChart />
        <MacdChart />
        <div className="mt-[6px] h-3 bg-[#f4f4f4]" />
        <InfoTabs />
        <FlowPreview />
      </main>
      <BottomNav />
    </div>
  );
}
